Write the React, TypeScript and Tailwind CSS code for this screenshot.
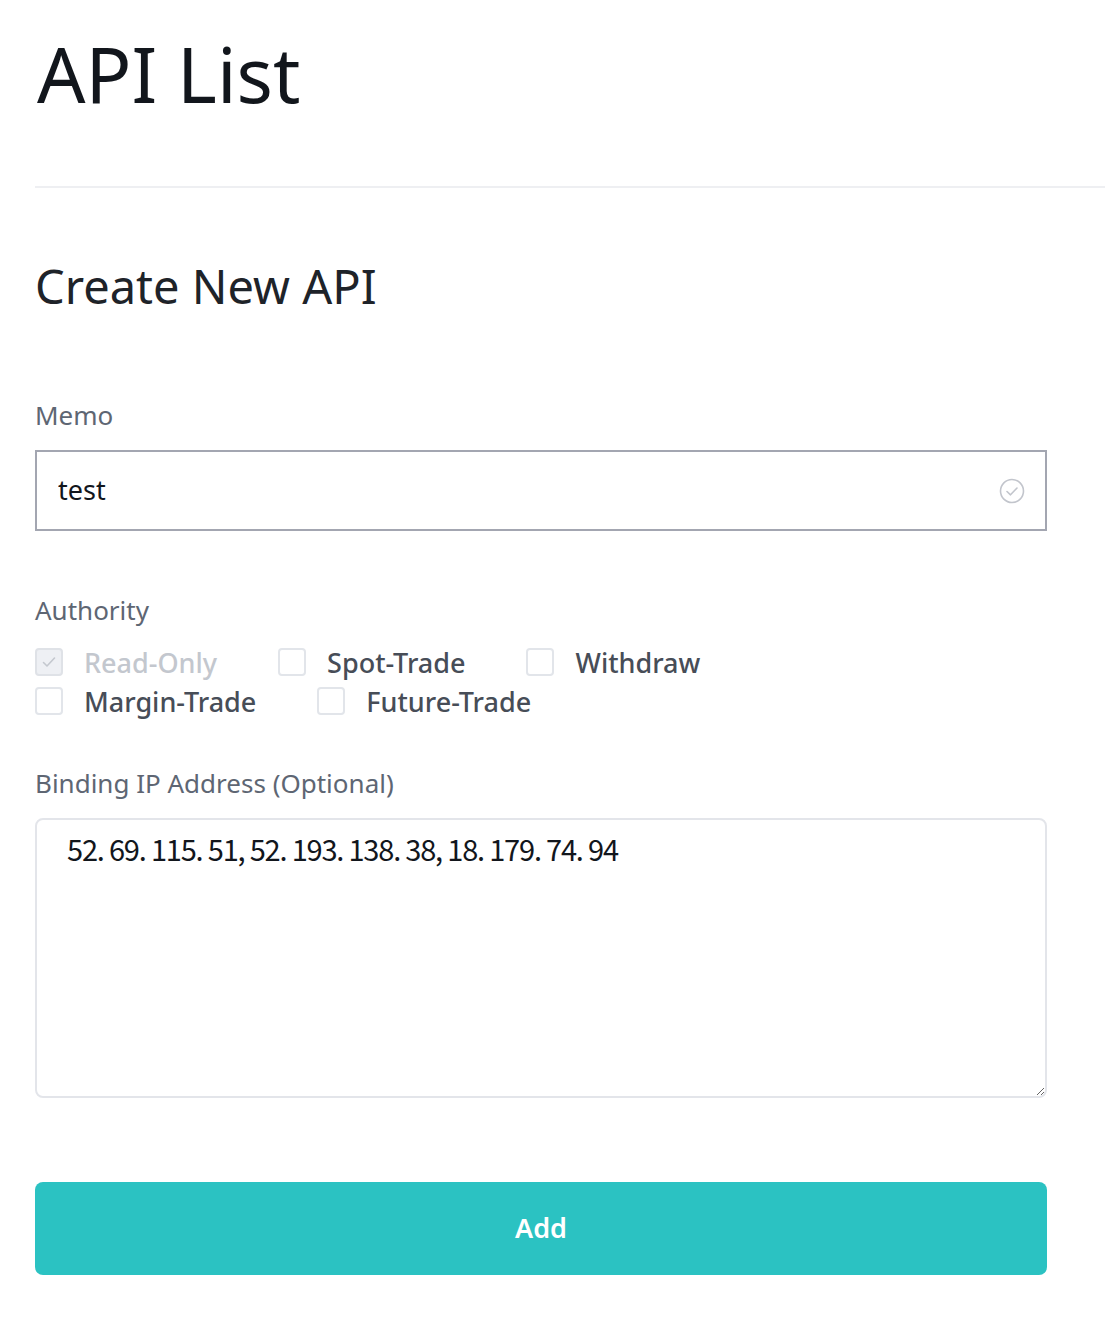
import React, { useState } from 'react';

const font = { fontFamily: '"Noto Sans", "Open Sans", sans-serif' };

const CheckItem = ({ label, checked, disabled }: { label: string; checked?: boolean; disabled?: boolean }) => (
    <label className="flex items-center gap-[21px] cursor-pointer">
        <span
            className={
                'flex h-[28px] w-[28px] items-center justify-center rounded-[4px] border-2 ' +
                (disabled ? 'border-[#dfe2e7] bg-[#eef0f4]' : 'border-[#e2e5ea] bg-white')
            }
        >
            {checked && (
                <svg width="16" height="16" viewBox="0 0 16 16" fill="none">
                    <path d="M2.5 8.5l3.5 3.5 7.5-8" stroke="#c4c8cf" strokeWidth="1.6" strokeLinecap="round" strokeLinejoin="round" />
                </svg>
            )}
        </span>
        <span className={'text-[27px] font-medium leading-none ' + (disabled ? 'text-[#c3c7ce]' : 'text-[#474d57]')}>
            {label}
        </span>
    </label>
);

const App = () => {
    const [memo, setMemo] = useState('test');
    const [ips, setIps] = useState('52. 69. 115. 51, 52. 193. 138. 38, 18. 179. 74. 94');

    return (
        <div className="min-h-screen bg-white pl-[35px] pt-[28px]" style={font}>
            <h1 className="pl-[2px] text-[76px] leading-[92px] text-[#12161c]">API List</h1>

            <div className="mt-[66px] h-[2px] bg-[#eeeff2]" />

            <div className="pr-[58px]">
                <h2 className="mt-[68px] text-[47px] leading-[60px] text-[#1e2329]">Create New API</h2>

                {/* memo */}
                <div className="mt-[82px] text-[26px] leading-[34px] text-[#5e6673]">Memo</div>
                <div className="mt-[18px] flex h-[81px] items-center border-2 border-[#a3a6b1] bg-white pl-[21px] pr-[20px]">
                    <input
                        autoFocus
                        value={memo}
                        onChange={e => setMemo(e.target.value)}
                        className="flex-1 bg-transparent text-[27px] text-[#12161c] caret-black outline-none"
                        style={font}
                    />
                    <svg width="26" height="26" viewBox="0 0 26 26" fill="none">
                        <circle cx="13" cy="13" r="11.5" stroke="#c2c5cc" strokeWidth="1.6" />
                        <path d="M8 13.5l3.5 3.3 6.5-6.8" stroke="#c2c5cc" strokeWidth="1.6" strokeLinecap="round" strokeLinejoin="round" />
                    </svg>
                </div>

                {/* authority */}
                <div className="mt-[62px] text-[26px] leading-[34px] text-[#5e6673]">Authority</div>
                <div className="mt-[21px] flex flex-col gap-[11px]">
                    <div className="flex gap-[61px]">
                        <CheckItem label="Read-Only" checked disabled />
                        <CheckItem label="Spot-Trade" />
                        <CheckItem label="Withdraw" />
                    </div>
                    <div className="flex gap-[61px]">
                        <CheckItem label="Margin-Trade" />
                        <CheckItem label="Future-Trade" />
                    </div>
                </div>

                {/* ip */}
                <div className="mt-[51px] text-[26px] leading-[34px] text-[#5e6673]">Binding IP Address (Optional)</div>
                <textarea
                    value={ips}
                    onChange={e => setIps(e.target.value)}
                    className="mt-[18px] block h-[280px] w-full rounded-[8px] border-2 border-[#e3e5ea] px-[30px] pt-[8px] text-[29px] leading-[40px] tracking-[-1.2px] text-[#12161c] outline-none"
                    style={{ fontFamily: '"Noto Sans CJK JP", sans-serif' }}
                />

                <button className="mt-[84px] flex h-[93px] w-full items-center justify-center rounded-[8px] bg-[#2bc2c2] text-[27px] font-semibold text-white">
                    Add
                </button>
            </div>
        </div>
    );
};

export default App;
